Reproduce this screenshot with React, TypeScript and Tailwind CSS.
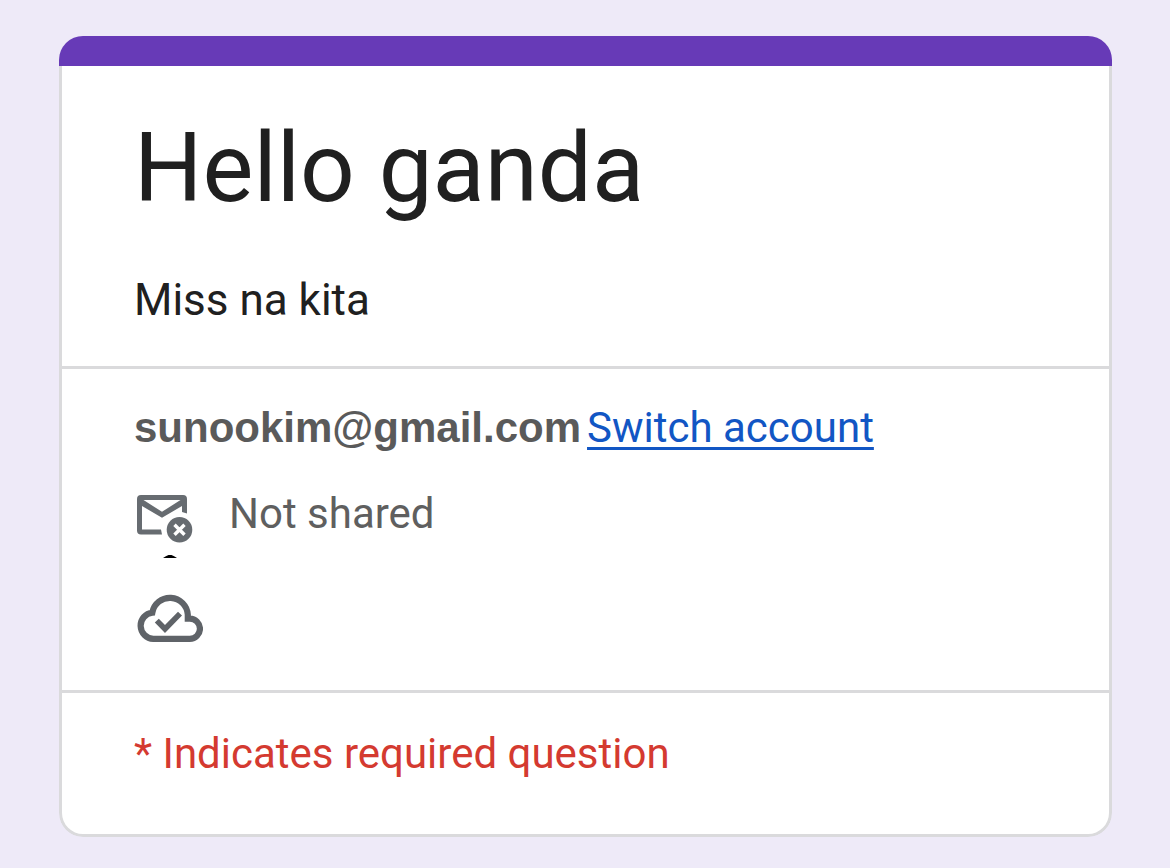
function MailOffIcon() {
  return (
    <svg className="mt-2.5 h-12 w-14 shrink-0" viewBox="0 0 56 48" aria-hidden="true">
      <path
        fill="#676c71"
        fillRule="evenodd"
        d="M4 0H46a4 4 0 0 1 4 4V18.5l-5-1.5V11L25 22.8 5 11V34.5H24l1 5H4a4 4 0 0 1-4-4V4a4 4 0 0 1 4-4ZM6.5 5H43.5L25 16.8Z"
      />
      <circle cx="42.5" cy="34.7" r="12.8" fill="#676c71" />
      <path d="M37.5 29.7l10 10M47.5 29.7l-10 10" stroke="#fff" strokeWidth="3.4" fill="none" />
    </svg>
  );
}

function CloudDoneIcon() {
  return (
    <svg className="h-12 w-[66px]" viewBox="0 0 66 48" fill="none" stroke="#5f6368" aria-hidden="true">
      <path
        strokeWidth="6.2"
        d="M16.3 44.9a13.2 13.2 0 0 1 -1 -26.3A17.9 17.9 0 0 1 50.8 20.7V24.6H52.8a10.1 10.1 0 0 1 0 20.3Z"
      />
      <path strokeWidth="5.6" d="M19.8 26.6L28 34.9L43 19.6" />
    </svg>
  );
}

function NotchMark() {
  return (
    <svg className="ml-[25px] mt-[11px] h-[3px] w-4" viewBox="0 0 16 3" aria-hidden="true">
      <path d="M1 3Q4 1.2 6.5 0H9.5Q12 1.2 15 3Z" fill="#000" />
    </svg>
  );
}

export default function App() {
  return (
    <div className="min-h-screen bg-[#eeeaf8] pl-[59px] pr-[58px] pt-9 pb-8 font-['Roboto',sans-serif] text-[42px] leading-[60px]">
      <main className="overflow-hidden rounded-3xl">
        <div className="h-[30px] bg-[#673ab7]" />
        <div className="rounded-b-3xl border-x-[3px] border-b-[3px] border-[#dadadc] bg-white">
          <header className="border-b-[3px] border-[#dadadc] px-[72px] pt-[42px] pb-9 text-[#202020]">
            <h1 className="text-[96px] leading-[120px]">Hello ganda</h1>
            <p className="mt-[42px] text-[44px]">Miss na kita</p>
          </header>
          <section className="border-b-[3px] border-[#dadadc] px-[72px] pt-[29px] pb-12 text-[#5f5f5f]">
            <div className="flex flex-wrap items-baseline gap-x-1.5">
              <span className="font-['Liberation_Sans',Arial,sans-serif] font-bold text-[#5a5a5a]">
                sunookim@gmail.com
              </span>
              <a
                href="#switch"
                className="text-[#1256c4] underline decoration-[3px] underline-offset-[5px] [text-decoration-skip-ink:none]"
              >
                Switch account
              </a>
            </div>
            <div className="mt-[26px] flex h-[60px] items-center gap-9 pl-[3px]">
              <MailOffIcon />
              <span>Not shared</span>
            </div>
            <div className="flex flex-col gap-9 pl-[3px]">
              <NotchMark />
              <CloudDoneIcon />
            </div>
          </section>
          <p className="px-[72px] pt-[31px] pb-[50px] text-[#d43a30]">* Indicates required question</p>
        </div>
      </main>
    </div>
  );
}
